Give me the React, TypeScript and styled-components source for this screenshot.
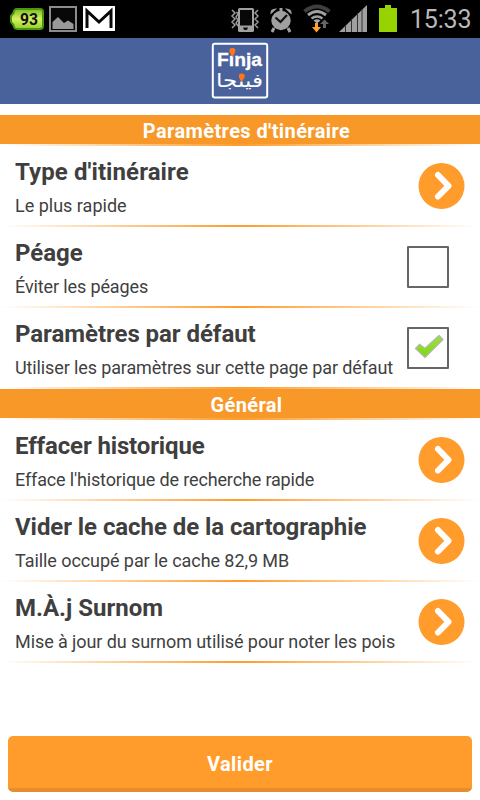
import React from 'react';
import styled, { createGlobalStyle } from 'styled-components';

const GlobalStyle = createGlobalStyle`
  html, body { margin: 0; padding: 0; }
  body { background: #fff; font-family: Roboto, sans-serif; color: #3f3f3f; }
  svg { display: block; flex: none; }
`;

const Screen = styled.main`
  width: 480px;
  height: 800px;
  display: flex;
  flex-direction: column;
  background: #fff;
  overflow: hidden;
`;

const StatusBar = styled.header`
  height: 38px;
  flex: none;
  display: flex;
  align-items: center;
  justify-content: space-between;
  background: #000;
`;

const StatusGroup = styled.div`
  display: flex;
  align-items: center;
`;

const Clock = styled.time`
  width: 70px;
  padding: 2px 0 0 1px;
  font-size: 25px;
  line-height: 38px;
  letter-spacing: -0.2px;
  color: #b8b8b8;
  font-weight: 400;
  white-space: nowrap;
`;

const BrandBar = styled.div`
  height: 66px;
  flex: none;
  display: flex;
  justify-content: center;
  align-items: center;
  background: #4a629b;
  margin-bottom: 11px;
`;

const SectionTitle = styled.h2<{ $track: number }>`
  margin: 0;
  padding-left: 13px;
  height: 29px;
  flex: none;
  background: #f89828;
  color: #fff;
  font-size: 20px;
  font-weight: 700;
  line-height: 32px;
  letter-spacing: ${(p) => p.$track}px;
  text-align: center;
`;

const Divider = styled.hr`
  margin: 0;
  border: 0;
  height: 2px;
  flex: none;
  background: linear-gradient(90deg, #fff 0%, #ff9c2c 50%, #fff 100%);
`;

const Row = styled.div<{ $end: number }>`
  height: 79px;
  flex: none;
  box-sizing: border-box;
  padding: 0 ${(p) => p.$end}px 0 15px;
  display: flex;
  align-items: center;
  justify-content: space-between;
`;

const RowText = styled.div`
  align-self: flex-start;
  padding-top: 12px;
  white-space: nowrap;
`;

const RowTitle = styled.div<{ $track: number }>`
  font-size: 24px;
  font-weight: 700;
  line-height: 28px;
  letter-spacing: ${(p) => p.$track}px;
`;

const RowSubtitle = styled.div<{ $track: number }>`
  margin-top: 9px;
  font-size: 18px;
  line-height: 22px;
  letter-spacing: ${(p) => p.$track}px;
`;

const CheckBox = styled.span`
  width: 42px;
  height: 42px;
  flex: none;
  box-sizing: border-box;
  border: 2px solid #666;
  border-radius: 1px;
  background: #fff;
`;

const Submit = styled.button`
  margin: auto 8px 8px;
  height: 56px;
  flex: none;
  border: 0;
  border-bottom: 4px solid #e48e2e;
  border-radius: 5px;
  padding: 3px 0 0;
  background: #ff9c2c;
  color: #fff;
  font: 700 20px/24px Roboto, sans-serif;
  letter-spacing: 0.4px;
`;

const NotificationIcons = () => (
  <svg width="120" height="38" viewBox="0 0 120 38">
    <defs>
      <linearGradient id="charge" x1="0" y1="0" x2="0" y2="1">
        <stop offset="0" stopColor="#79bb25" />
        <stop offset="0.5" stopColor="#d8ef5c" />
        <stop offset="1" stopColor="#8fd02c" />
      </linearGradient>
    </defs>
    <path d="M17 9H40Q43 9 43 12V26Q43 29 40 29H17Q14 29 13.5 25L11 22V16L13.5 13Q14 9 17 9Z" fill="url(#charge)" stroke="#4a970f" strokeWidth="2" />
    <text x="20" y="25" fontFamily="Roboto, sans-serif" fontSize="16" fontWeight="700" fill="#111" textLength="18" lengthAdjust="spacingAndGlyphs">93</text>
    <rect x="50" y="7" width="26" height="24" fill="#080808" stroke="#8c8c8c" strokeWidth="2" />
    <path d="M52.5 29V22L58 17L64 23L68 20.5L73.500 24V29Z" fill="#999" />
    <rect x="83" y="6" width="32" height="25" fill="#fff" />
    <path d="M87 28V11L99 22L111 11V28" fill="none" stroke="#080808" strokeWidth="3" />
  </svg>
);

const SystemIcons = () => (
  <svg width="180" height="38" viewBox="229 0 180 38">
    <path d="M232 10L235 13L232 16L235 19L232 22L235 25L232 28M236.500 12L238 14L236 17L238 20L236 23L238 26M258 10L255 13L258 16L255 19L258 22L255 25L258 28" fill="none" stroke="#999" strokeWidth="1.500" />
    <rect x="238" y="8" width="16" height="24" rx="1.500" fill="#a0a0a0" />
    <rect x="240" y="10" width="12" height="15.500" fill="#080808" />
    <path d="M243 27.500H248L247 30H244Z" fill="#111" />
    <g fill="#a0a0a0">
      <circle cx="281" cy="20.500" r="9.700" />
      <path d="M270.500 14.500Q269.500 8 277 8.500ZM291.500 14.500Q292.500 8 285 8.500Z" />
      <rect x="279.500" y="8" width="3" height="4" />
    </g>
    <path d="M274 28L272 32M288 28L290 32" stroke="#a0a0a0" strokeWidth="3" />
    <path d="M275.500 17.500L280.500 22L287 15" fill="none" stroke="#111" strokeWidth="2.200" />
    <g fill="none">
      <path d="M304.500 11.500Q317 1.500 329.500 11.500" stroke="#3f3f3f" strokeWidth="4" />
      <path d="M308 15Q317 8 326 15" stroke="#a0a0a0" strokeWidth="3" />
      <path d="M311.500 18.500Q317 14.500 322.500 18.500" stroke="#a0a0a0" strokeWidth="2.500" />
    </g>
    <path d="M313.500 20.500Q317 18 320.500 20.500L317 23.500Z" fill="#aaa" />
    <path d="M315 23H318V27H321L316.500 32.500L312 27H315Z" fill="#ffa02c" />
    <path d="M323 28V24H320L324.500 19.500L329 24H326V28Z" fill="#666" />
    <path d="M339 32L367 5V32Z" fill="#a0a0a0" />
    <path d="M345.500 25V32M351.500 19V32M357.500 13V32M362 9V32" stroke="#333" strokeWidth="1" />
    <path d="M379 8H385V5H391V8H397V32H379Z" fill="#96d300" />
  </svg>
);

const BrandLogo = () => (
  <svg width="58" height="58" viewBox="211 42 58 58" role="img" aria-label="Finja">
    <rect x="212.800" y="43.800" width="54.400" height="53.700" rx="2" fill="#4a629b" stroke="#fff" strokeWidth="2" />
    <text x="217" y="65.700" fontFamily="Liberation Sans, sans-serif" fontWeight="700" fontSize="19" fill="#fff" stroke="#fff" strokeWidth="0.300" textLength="45" lengthAdjust="spacingAndGlyphs">Fınja</text>
    <text x="263" y="86.500" direction="rtl" fontFamily="DejaVu Sans, sans-serif" fontSize="19" fill="#fff" textLength="47" lengthAdjust="spacingAndGlyphs">فينجا</text>
    <path d="M232.500 57L229.500 52Q228.500 48 232.300 48Q236.200 48 235.200 52Z" fill="#ff741c" />
    <path d="M241.500 82L239 77.500Q238 73.500 241.700 73.500Q245.500 73.500 244.500 77.500Z" fill="#ff741c" />
  </svg>
);

const ArrowIcon = () => (
  <svg width="47" height="47" viewBox="0 0 47 47">
    <circle cx="23.500" cy="24" r="23" fill="#ff9c2c" />
    <path d="M20 13L30.500 23.800L20 34.500" fill="none" stroke="#fff" strokeWidth="6" strokeLinecap="round" strokeLinejoin="round" />
  </svg>
);

const CheckIcon = () => (
  <svg width="38" height="38" viewBox="0 0 38 38">
    <defs>
      <linearGradient id="tick" x1="0" y1="0" x2="0" y2="1">
        <stop offset="0" stopColor="#9be43c" />
        <stop offset="1" stopColor="#7ed60c" />
      </linearGradient>
    </defs>
    <path d="M6.500 19.500L10.500 15.200L16 19.300L30 6.500L34 10.500L16 28.500Z" fill="url(#tick)" stroke="#b5b5b5" strokeWidth="1.200" strokeLinejoin="round" />
  </svg>
);

interface SettingProps {
  title: string;
  subtitle: string;
  titleTrack?: number;
  subtitleTrack?: number;
  kind?: 'link' | 'off' | 'on';
}

const Setting = ({ title, subtitle, titleTrack = 0, subtitleTrack = 0, kind = 'link' }: SettingProps) => (
  <Row $end={kind === 'link' ? 15 : 31}>
    <RowText>
      <RowTitle $track={titleTrack}>{title}</RowTitle>
      <RowSubtitle $track={subtitleTrack}>{subtitle}</RowSubtitle>
    </RowText>
    {kind === 'link' ? <ArrowIcon /> : <CheckBox>{kind === 'on' && <CheckIcon />}</CheckBox>}
  </Row>
);

export default function App() {
  return (
    <>
      <GlobalStyle />
      <Screen>
        <StatusBar>
          <NotificationIcons />
          <StatusGroup>
            <SystemIcons />
            <Clock>15:33</Clock>
          </StatusGroup>
        </StatusBar>
        <BrandBar><BrandLogo /></BrandBar>
        <SectionTitle $track={0.4}>Paramètres d'tinéraire</SectionTitle>
        <Divider />
        <Setting title="Type d'itinéraire" titleTrack={0.09} subtitle="Le plus rapide" />
        <Divider />
        <Setting title="Péage" subtitle="Éviter les péages" subtitleTrack={-0.12} kind="off" />
        <Divider />
        <Setting
          title="Paramètres par défaut"
          titleTrack={-0.05}
          subtitle="Utiliser les paramètres sur cette page par défaut"
          subtitleTrack={-0.125}
          kind="on"
        />
        <Divider />
        <SectionTitle $track={0.35}>Général</SectionTitle>
        <Divider />
        <Setting
          title="Effacer historique"
          titleTrack={-0.14}
          subtitle="Efface l'historique de recherche rapide"
          subtitleTrack={-0.15}
        />
        <Divider />
        <Setting
          title="Vider le cache de la cartographie"
          titleTrack={-0.07}
          subtitle="Taille occupé par le cache 82,9 MB"
          subtitleTrack={-0.07}
        />
        <Divider />
        <Setting
          title="M.À.j Surnom"
          subtitle="Mise à jour du surnom utilisé pour noter les pois"
          subtitleTrack={-0.08}
        />
        <Divider />
        <Submit type="button">Valider</Submit>
      </Screen>
    </>
  );
}
